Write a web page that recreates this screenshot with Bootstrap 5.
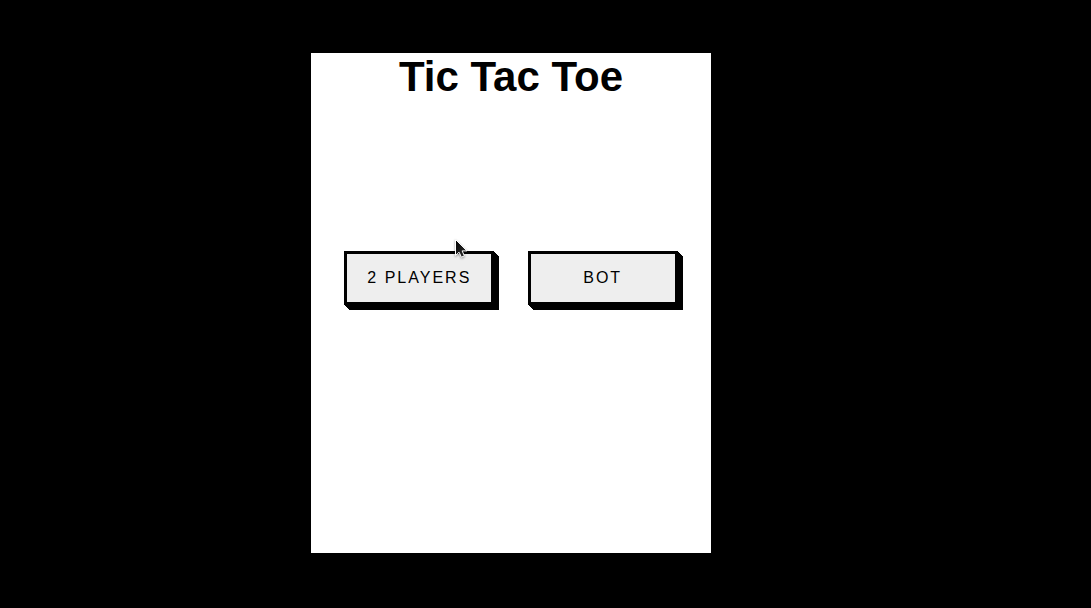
<!DOCTYPE html>
<html lang="en">
<head>
<meta charset="utf-8">
<meta name="viewport" content="width=device-width, initial-scale=1">
<title>Tic Tac Toe</title>
<link rel="stylesheet" href="https://cdn.jsdelivr.net/npm/bootstrap@5.3.0/dist/css/bootstrap.min.css">
<style>
  body { font-family: "Liberation Sans", Arial, sans-serif; }
  .stage { padding-right: 69px; padding-bottom: 2px; }
  .game-panel { max-width: 400px; min-height: 500px; }
  .game-title { font-size: 42px; line-height: 48px; }
  .mode-list { margin-top: 150px; }
  .btn-mode {
    --bs-btn-bg: #eee;
    --bs-btn-color: #000;
    --bs-btn-border-color: #000;
    --bs-btn-border-width: 3px;
    --bs-btn-border-radius: 0;
    --bs-btn-hover-bg: #eee;
    --bs-btn-hover-color: #000;
    --bs-btn-hover-border-color: #000;
    --bs-btn-padding-x: 0;
    --bs-btn-padding-y: 12px;
    width: 150px;
    line-height: 24px;
    letter-spacing: 2px;
    box-shadow: 1px 1px #000, 2px 2px #000, 3px 3px #000, 4px 4px #000, 5px 5px #000;
  }
  /* mouse pointer floating over the first button */
  .pointer {
    top: -12px;
    left: 111px;
    pointer-events: none;
    filter: drop-shadow(0 1px 1px rgba(0, 0, 0, .4));
  }
</style>
</head>
<body class="bg-black">
<main class="stage min-vh-100 d-flex justify-content-center align-items-center">
  <section class="game-panel w-100 bg-white text-black">
    <h1 class="game-title fw-bold text-center m-0">Tic Tac Toe</h1>
    <div class="mode-list d-flex justify-content-evenly">
      <div class="position-relative">
        <button type="button" class="btn btn-mode">2 PLAYERS</button>
        <svg class="pointer position-absolute" width="16" height="22" viewBox="0 0 16 22" aria-hidden="true">
          <defs>
            <linearGradient id="pointer-fill" x1="0" y1="0" x2="1" y2="1">
              <stop offset="0" stop-color="#000"/>
              <stop offset="1" stop-color="#333"/>
            </linearGradient>
          </defs>
          <path d="M.5 .5v16l3.600-3.300 2.300 5 3-1.400-2.300-4.900h4.900z" fill="url(#pointer-fill)" stroke="#fff" stroke-width="1"/>
        </svg>
      </div>
      <button type="button" class="btn btn-mode">BOT</button>
    </div>
  </section>
</main>
<script src="https://cdn.jsdelivr.net/npm/bootstrap@5.3.0/dist/js/bootstrap.bundle.min.js"></script>
</body>
</html>
